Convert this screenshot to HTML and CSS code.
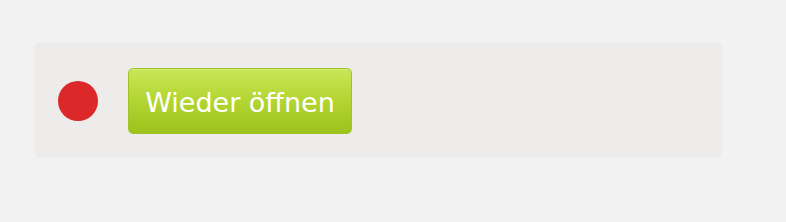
FILE: index.html
```html
<!DOCTYPE html>
<html>
<head>
  <title>Status</title>
  <link rel="stylesheet" href="styles.css">
</head>
<body>
  <div class="status-panel">
    <span class="status-dot"></span>
    <button class="reopen-button">Wieder öffnen</button>
  </div>
</body>
</html>
```

FILE: styles.css
```css
body {
  margin: 0;
  background-color: #f3f2f2;
  font-family: "DejaVu Sans", sans-serif;
}

.status-panel {
  display: flex;
  align-items: center;
  box-sizing: border-box;
  width: 688px;
  height: 116px;
  margin: 42px 0 0 34px;
  padding: 2px 0 0 24px;
  background-color: #eeecea;
  border-radius: 6px;
}

.status-dot {
  width: 40px;
  height: 40px;
  border-radius: 50%;
  background-color: #dc2828;
}

.reopen-button {
  box-sizing: border-box;
  width: 224px;
  height: 66px;
  margin-left: 30px;
  padding: 2px 0 0;
  font-family: "DejaVu Sans", sans-serif;
  font-size: 27px;
  color: #fff;
  border: 1px solid #9fc42a;
  border-radius: 5px;
  background: linear-gradient(to bottom, #c9e657 0%, #b5d735 45%, #9dc21b 100%);
  box-shadow: inset 0 1px 0 #d6ee74;
}
```
